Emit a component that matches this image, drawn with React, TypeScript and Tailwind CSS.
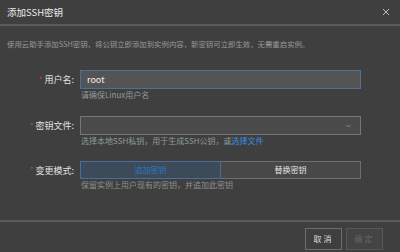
const font = { fontFamily: '"Noto Sans CJK SC", "Noto Sans", sans-serif' };

function Label({ text }: { text: string }) {
  return (
    <div className="flex w-[77px] shrink-0 items-center justify-end pr-[3px] text-[9px] leading-none text-[#e2e2e2]">
      <span className="mr-[2px] text-[8px] text-[#d0443c]">*</span>
      {text}
    </div>
  );
}

export default function App() {
  return (
    <div className="flex h-[252px] w-[400px] flex-col bg-[#3f3f3f] text-[#e0e0e0]" style={font}>
      {/* header */}
      <div className="flex h-[24px] items-center justify-between pl-[7px] pr-[10px]">
        <span className="text-[9.5px] text-[#ececec]">添加SSH密钥</span>
        <svg width="8" height="8" viewBox="0 0 8 8" className="text-[#bdbdbd]">
          <path d="M1 1L7 7M7 1L1 7" stroke="currentColor" strokeWidth="1" />
        </svg>
      </div>
      <div className="h-[2px] bg-[#5a5a5a]" />

      <div className="flex-1">
        <p className="mt-[12px] px-[7px] text-[7.4px] leading-[12px] text-[#9a9a9a]">
          使用云助手添加SSH密钥，将公钥立即添加到实例内容，新密钥可立即生效，无需重启实例。
        </p>

        {/* user name */}
        <div className="mt-[20px] flex items-center">
          <Label text="用户名:" />
          <div className="ml-[3px] flex h-[19px] w-[281px] items-center border border-[#4d6f9c] bg-[#545454] px-[6px] text-[9px] text-[#f0f0f0]">
            root
          </div>
        </div>
        <p className="ml-[81px] text-[8px] leading-[12px] text-[#8f9a9a]">请确保Linux用户名</p>

        {/* key file */}
        <div className="mt-[15px] flex items-center">
          <Label text="密钥文件:" />
          <div className="ml-[3px] flex h-[19px] w-[281px] items-center justify-end border border-[#767676] bg-[#4b4b4b] pr-[9px]">
            <svg width="5" height="4" viewBox="0 0 5 4" className="text-[#9a9a9a]">
              <path d="M0.5 1L2.5 3L4.5 1" fill="none" stroke="currentColor" strokeWidth="0.8" />
            </svg>
          </div>
        </div>
        <p className="ml-[81px] text-[8px] leading-[12px] text-[#8f9a9a]">
          选择本地SSH私钥，用于生成SSH公钥，或<span className="text-[#3a8ee0]">选择文件</span>
        </p>

        {/* mode */}
        <div className="mt-[14px] flex items-center">
          <Label text="变更模式:" />
          <div className="ml-[3px] flex h-[18px] w-[281px]">
            <div className="flex w-[141px] items-center justify-center border border-[#4a6d9c] bg-[#3c4a59] text-[8px] text-[#2f78c4]">
              追加密钥
            </div>
            <div className="flex flex-1 items-center justify-center border border-l-0 border-[#6e6e6e] bg-[#484848] text-[8px] text-[#e4e4e4]">
              替换密钥
            </div>
          </div>
        </div>
        <p className="ml-[81px] text-[8px] leading-[12px] text-[#8f8f8f]">保留实例上用户现有的密钥，并追加此密钥</p>
      </div>

      {/* footer */}
      <div className="h-[2px] bg-[#5a5a5a]" />
      <div className="flex h-[30px] items-start justify-end gap-[4px] pr-[17px] pt-[6px]">
        <button className="flex h-[22px] w-[37px] items-center justify-center border border-[#6c6c6c] bg-[#3f3f3f] text-[8px] tracking-[2px] text-[#dcdcdc]">
          取消
        </button>
        <button className="flex h-[22px] w-[37px] items-center justify-center border border-[#575757] bg-[#444444] text-[8px] tracking-[2px] text-[#666666]">
          确定
        </button>
      </div>
    </div>
  );
}
